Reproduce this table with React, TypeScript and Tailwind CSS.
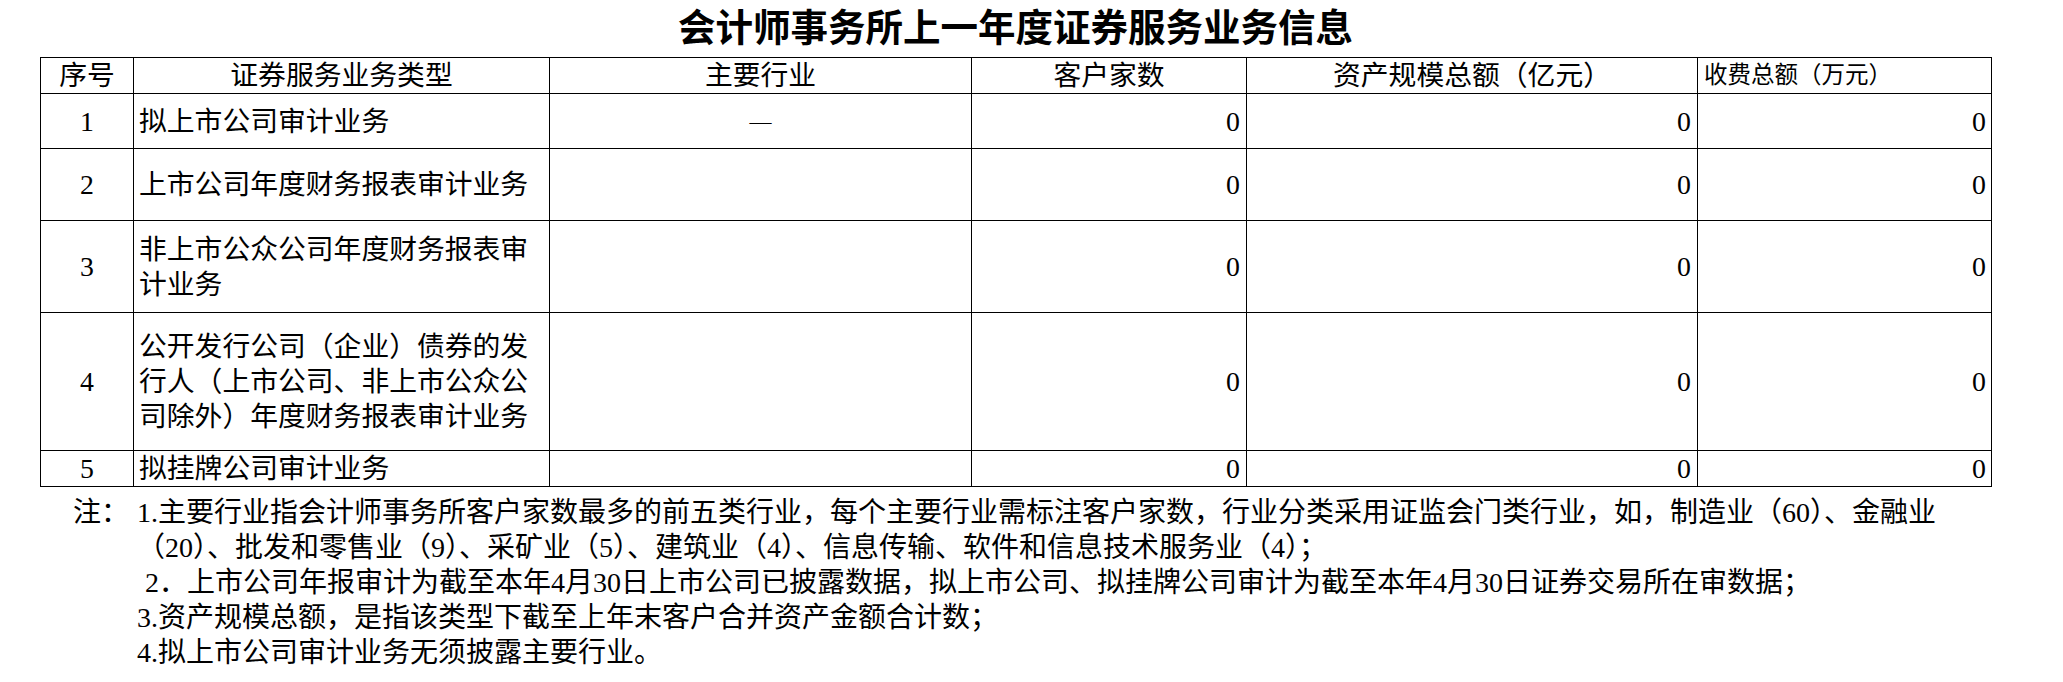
const rows = [
  { no: "1", type: ["拟上市公司审计业务"], industry: "—", h: "h-[55px]" },
  { no: "2", type: ["上市公司年度财务报表审计业务"], industry: "", h: "h-[72px]" },
  { no: "3", type: ["非上市公众公司年度财务报表审", "计业务"], industry: "", h: "h-[92px]" },
  {
    no: "4",
    type: ["公开发行公司（企业）债券的发", "行人（上市公司、非上市公众公", "司除外）年度财务报表审计业务"],
    industry: "",
    h: "h-[138px]",
  },
  { no: "5", type: ["拟挂牌公司审计业务"], industry: "", h: "h-[34px]" },
];

const notes = [
  { text: "1.主要行业指会计师事务所客户家数最多的前五类行业，每个主要行业需标注客户家数，行业分类采用证监会门类行业，如，制造业（60）、金融业", pad: "" },
  { text: "（20）、批发和零售业（9）、采矿业（5）、建筑业（4）、信息传输、软件和信息技术服务业（4）；", pad: "" },
  { text: "2．上市公司年报审计为截至本年4月30日上市公司已披露数据，拟上市公司、拟挂牌公司审计为截至本年4月30日证券交易所在审数据；", pad: "pl-[8px]" },
  { text: "3.资产规模总额，是指该类型下截至上年末客户合并资产金额合计数；", pad: "" },
  { text: "4.拟上市公司审计业务无须披露主要行业。", pad: "" },
];

const cell = "border border-black p-0";

export default function App() {
  return (
    <div
      className="w-[2063px] h-[682px] bg-white text-black pl-[40px] text-[27.8px] leading-[35px] overflow-hidden"
      style={{ fontFamily: '"Liberation Serif", "Noto Sans CJK SC", serif' }}
    >
      <div className="w-[1951px] h-[57px] flex items-center justify-center">
        <h1 className="text-[37.5px] font-bold leading-none">会计师事务所上一年度证券服务业务信息</h1>
      </div>

      <table className="table-fixed border-collapse w-[1951px]">
        <colgroup>
          <col className="w-[93px]" />
          <col className="w-[416px]" />
          <col className="w-[422px]" />
          <col className="w-[275px]" />
          <col className="w-[451px]" />
          <col className="w-[294px]" />
        </colgroup>
        <thead>
          <tr className="h-[36px]">
            <th className={`${cell} font-normal text-center`}>序号</th>
            <th className={`${cell} font-normal text-center`}>证券服务业务类型</th>
            <th className={`${cell} font-normal text-center`}>主要行业</th>
            <th className={`${cell} font-normal text-center`}>客户家数</th>
            <th className={`${cell} font-normal text-center`}>资产规模总额（亿元）</th>
            <th className={`${cell} font-normal text-left pl-[6px] text-[23.5px]`}>收费总额（万元）</th>
          </tr>
        </thead>
        <tbody>
          {rows.map((r) => (
            <tr key={r.no} className={r.h}>
              <td className={`${cell} text-center align-middle`}>{r.no}</td>
              <td className={`${cell} pl-[5px] align-middle`}>
                {r.type.map((line, i) => (
                  <div key={i} className="whitespace-nowrap">{line}</div>
                ))}
              </td>
              <td className={`${cell} text-center align-middle text-[22px]`}>{r.industry}</td>
              <td className={`${cell} text-right pr-[6px] align-middle`}>0</td>
              <td className={`${cell} text-right pr-[6px] align-middle`}>0</td>
              <td className={`${cell} text-right pr-[5px] align-middle`}>0</td>
            </tr>
          ))}
        </tbody>
      </table>

      <div className="flex pt-[8px] pl-[33px] text-[28px]">
        <div className="w-[64px] shrink-0">注：</div>
        <div className="flex flex-col">
          {notes.map((n, i) => (
            <div key={i} className={`whitespace-nowrap ${n.pad}`}>{n.text}</div>
          ))}
        </div>
      </div>
    </div>
  );
}
